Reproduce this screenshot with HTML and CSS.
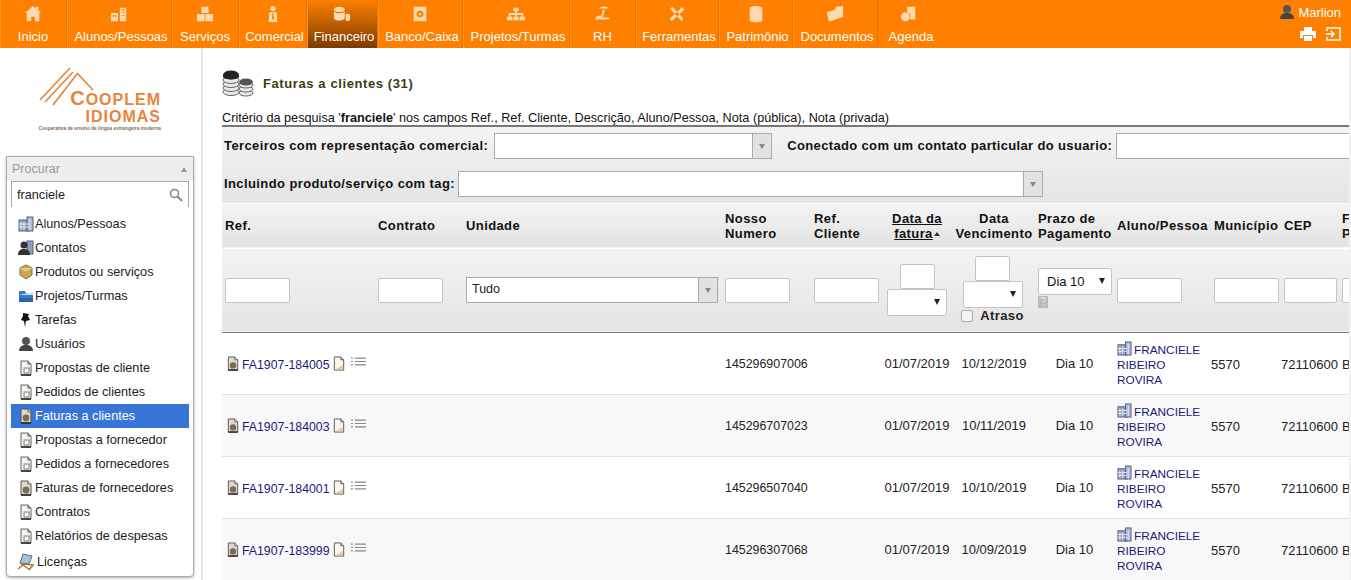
FILE: index.html
```html
<!DOCTYPE html>
<html lang="pt-BR">
<head>
<meta charset="UTF-8">
<title>Faturas a clientes</title>
<link rel="stylesheet" href="styles.css">
</head>
<body>
<svg class="defs" width="0" height="0">
  <symbol id="i-doc" viewBox="0 0 12 16"><path d="M1 1h7l3 3v11H1z" fill="#f7f5ef" stroke="#666"/><path d="M8 1v3h3" fill="#bbb" stroke="#555"/><rect x="4" y="8" width="5" height="5" fill="none" stroke="#8a8272"/><path d="M1 15h10" stroke="#222" stroke-width="1.500"/></symbol>
  <symbol id="i-bill" viewBox="0 0 12 16"><path d="M1 1h7l3 3v11H1z" fill="#ddd8cc" stroke="#555"/><path d="M8 1v3h3" fill="#fff" stroke="#555"/><circle cx="6" cy="10" r="3.400" fill="#7b6a55"/><path d="M1 15h10" stroke="#222" stroke-width="1.500"/></symbol>
  <symbol id="i-note" viewBox="0 0 12 16"><path d="M1 1h7l3 3v11H1z" fill="#fdf6ea" stroke="#555"/><path d="M8 1v3h3" fill="#ddd" stroke="#555"/><path d="M3 14h7V9z" fill="#f3c99a"/></symbol>
  <symbol id="i-list" viewBox="0 0 16 9"><path d="M0 1h2M4 1h12M0 4.500h2M4 4.500h12M0 8h2M4 8h12" stroke="#888" stroke-width="1.300"/></symbol>
  <symbol id="i-company" viewBox="0 0 16 16"><rect x="1" y="4" width="10" height="11" fill="#8f9fc4" stroke="#56627f"/><rect x="9" y="1" width="6" height="14" fill="#aab6d2" stroke="#56627f"/><path d="M3 6v8M6 6v8M1 8h10M1 11h10M12 3v11" stroke="#e5e9f2"/></symbol>
  <symbol id="i-contact" viewBox="0 0 16 16"><rect x="9" y="1" width="6" height="13" fill="#8f9fc4" stroke="#56627f"/><circle cx="6" cy="5" r="3.500" fill="#333"/><path d="M0 15c0-5 3-6 6-6s6 1 6 6z" fill="#333"/></symbol>
  <symbol id="i-box" viewBox="0 0 16 16"><path d="M8 1l6 3v7l-6 4-6-4V4z" fill="#c9a654" stroke="#85703a"/><path d="M2 4l6 3 6-3" fill="#e3cb8a" stroke="#e3cb8a"/></symbol>
  <symbol id="i-folder" viewBox="0 0 16 16"><path d="M1 3h6l1 2h7v9H1z" fill="#3b78c9"/><path d="M1 7l14-3v3H1z" fill="#cfe0f5"/><path d="M1 10h14v4H1z" fill="#2c62ad"/></symbol>
  <symbol id="i-pin" viewBox="0 0 16 16"><path d="M5 1l6 1-1 2 2 4-4 1-1 6-1-6-3-1 2-4z" fill="#111"/></symbol>
  <symbol id="i-user" viewBox="0 0 16 16"><circle cx="8" cy="5" r="4" fill="#555"/><path d="M1 15c0-5 4-6 7-6s7 1 7 6z" fill="#444"/></symbol>
  <symbol id="i-chair" viewBox="0 0 18 18"><path d="M6 1l9 2-3 8-9-1z" fill="#9cc4ea" stroke="#7a6a4a"/><path d="M1 16l6-5 9 1-4 5M3 10l10 7" fill="none" stroke="#a5743a" stroke-width="1.500"/></symbol>
  <symbol id="i-coins" viewBox="0 0 32 28"><g fill="#e8e8e8" stroke="#666"><ellipse cx="9" cy="23" rx="8" ry="3.500"/><ellipse cx="9" cy="19" rx="8" ry="3.500"/><ellipse cx="9" cy="15" rx="8" ry="3.500"/><ellipse cx="9" cy="11" rx="8" ry="3.500"/><ellipse cx="24" cy="24" rx="7" ry="3"/><ellipse cx="24" cy="20" rx="7" ry="3"/><ellipse cx="24" cy="16" rx="7" ry="3"/></g><ellipse cx="9" cy="6" rx="8" ry="4.500" fill="#222"/><path d="M1 6v2c1 3 15 3 16 0V6z" fill="#222"/><ellipse cx="24" cy="13" rx="7" ry="3.500" fill="#555"/></symbol>
</svg>

<header class="topbar">
  <nav class="tabs">
    <a class="tab plain"><svg class="tab-icon" viewBox="0 0 20 20"><path d="M10 1l3 2.500V2h3v4l3 3h-2v9H12v-5H8v5H3V9H1z"/></svg><span>Inicio</span></a>
    <a class="tab"><svg class="tab-icon" viewBox="0 0 20 20"><path fill-rule="evenodd" d="M1 9h8v9H1zM3 11v2h1.500v-2zM5.500 11v2H7v-2zM11 3h7v15h-7zM13 5v1h3V5zM13 8v1h3V8zM13 11v1h3v-1z"/></svg><span>Alunos/Pessoas</span></a>
    <a class="tab plain"><svg class="tab-icon" viewBox="0 0 20 20"><path d="M6 2h8v7H6zM1 10h8.500v8H1zM10.500 10H19v8h-8.500z"/></svg><span>Serviços</span></a>
    <a class="tab"><svg class="tab-icon" viewBox="0 0 20 20"><circle cx="10" cy="4" r="3"/><path fill-rule="evenodd" d="M6 8h8l1 11H5zM9.500 9l-.7 6 1.200 2 1.200-2-.7-6z"/></svg><span>Comercial</span></a>
    <a class="tab active"><svg class="tab-icon" viewBox="0 0 20 20"><ellipse cx="7" cy="5" rx="6" ry="3"/><path d="M1 7c2 3 10 3 12 0v8c-2 3-10 3-12 0zM14 10c3-1 5 0 5 1v5c-1 2-4 2-5 1z"/></svg><span>Financeiro</span></a>
    <a class="tab"><svg class="tab-icon" viewBox="0 0 20 20"><path fill-rule="evenodd" d="M3 2h14v16H3zM10 6a4 4 0 1 0 .01 0zM10 8.500a1.500 1.500 0 1 1-.01 0z"/></svg><span>Banco/Caixa</span></a>
    <a class="tab"><svg class="tab-icon" viewBox="0 0 20 20"><path d="M7 3h6v4h-2v2h7v4h2v4h-6v-4h2v-2h-5v2h2v4H7v-4h2v-2H4v2h2v4H0v-4h2V9h7V7H7z"/></svg><span>Projetos/Turmas</span></a>
    <a class="tab plain"><svg class="tab-icon" viewBox="0 0 20 20"><path d="M5 4c3-3 9-3 12 0zM10 5h2l-2 8H8zM3 12h5v2h9v2H1z"/></svg><span>RH</span></a>
    <a class="tab"><svg class="tab-icon" viewBox="0 0 20 20"><path d="M2 4l3-2 12 13-2 3zM18 5l-3-3-2 3-11 10 2 3 11-10z"/></svg><span>Ferramentas</span></a>
    <a class="tab"><svg class="tab-icon" viewBox="0 0 20 20"><path d="M3 4c0-4 14-4 14 0v13c0 3-14 3-14 0z"/></svg><span>Patrimônio</span></a>
    <a class="tab"><svg class="tab-icon" viewBox="0 0 20 20"><path d="M1 8l9-3 1-3 8-1v12L5 18H3z"/></svg><span>Documentos</span></a>
    <a class="tab"><svg class="tab-icon" viewBox="0 0 20 20"><path d="M8 2h9v14h-6a5 5 0 0 0-3-8z"/><circle cx="6" cy="13" r="5"/></svg><span>Agenda</span></a>
  </nav>
  <div class="user-box">
    <div class="user-name"><svg class="icon-16"><use href="#i-user"/></svg>Marlion</div>
    <div class="user-tools">
      <svg width="16" height="14" viewBox="0 0 16 14"><path d="M4 0h8v4H4zM1 4h14a1 1 0 0 1 1 1v6h-3V8H3v3H0V5a1 1 0 0 1 1-1zM4 9h8v5H4z" fill="#fff"/></svg>
      <svg width="15" height="14" viewBox="0 0 15 14"><path d="M1 4V1h13v12H1v-3M0 7h8M5 4l3 3-3 3" fill="none" stroke="#fff" stroke-width="1.500"/></svg>
    </div>
  </div>
</header>

<div class="layout">
  <aside class="sidebar">
    <div class="logo">
      <svg class="logo-roof" width="58" height="40" viewBox="0 0 58 40"><path d="M1 33L31 1M6 35L34 5M14 38L38 7M38 6l16 17" fill="none" stroke="#e8843c" stroke-width="1.700"/></svg>
      <div class="logo-word logo-word-1"><span class="logo-big">C</span>OOPLEM</div>
      <div class="logo-word">IDIOMAS</div>
      <div class="logo-sub">Cooperativa de ensino de língua estrangeira moderna</div>
    </div>
    <div class="search-menu">
      <div class="search-head"><span>Procurar</span><i class="arrow-up"></i></div>
      <div class="search-input"><span>franciele</span>
        <svg width="14" height="14" viewBox="0 0 14 14"><circle cx="5.500" cy="5.500" r="4" fill="none" stroke="#888" stroke-width="1.600"/><path d="M8.500 8.500L13 13" stroke="#888" stroke-width="2"/></svg>
      </div>
      <ul class="search-list">
        <li><svg class="icon-16"><use href="#i-company"/></svg>Alunos/Pessoas</li>
        <li><svg class="icon-16"><use href="#i-contact"/></svg>Contatos</li>
        <li><svg class="icon-16"><use href="#i-box"/></svg>Produtos ou serviços</li>
        <li><svg class="icon-16"><use href="#i-folder"/></svg>Projetos/Turmas</li>
        <li><svg class="icon-16"><use href="#i-pin"/></svg>Tarefas</li>
        <li><svg class="icon-16"><use href="#i-user"/></svg>Usuários</li>
        <li><svg class="icon-16"><use href="#i-doc"/></svg>Propostas de cliente</li>
        <li><svg class="icon-16"><use href="#i-doc"/></svg>Pedidos de clientes</li>
        <li class="selected"><svg class="icon-16"><use href="#i-bill"/></svg>Faturas a clientes</li>
        <li><svg class="icon-16"><use href="#i-doc"/></svg>Propostas a fornecedor</li>
        <li><svg class="icon-16"><use href="#i-doc"/></svg>Pedidos a fornecedores</li>
        <li><svg class="icon-16"><use href="#i-bill"/></svg>Faturas de fornecedores</li>
        <li><svg class="icon-16"><use href="#i-doc"/></svg>Contratos</li>
        <li><svg class="icon-16"><use href="#i-doc"/></svg>Relatórios de despesas</li>
        <li class="last"><svg class="icon-18"><use href="#i-chair"/></svg>Licenças</li>
      </ul>
    </div>
  </aside>

  <main class="content">
    <div class="page-title"><svg class="title-icon"><use href="#i-coins"/></svg><h1>Faturas a clientes (31)</h1></div>
    <div class="criteria">Critério da pesquisa '<b>franciele</b>' nos campos Ref., Ref. Cliente, Descrição, Aluno/Pessoa, Nota (pública), Nota (privada)</div>

    <div class="filters">
      <div class="filter-line">
        <label>Terceiros com representação comercial:</label>
        <div class="combo combo-a"><i class="combo-btn"></i></div>
        <label class="label-b">Conectado com um contato particular do usuario:</label>
        <div class="combo combo-c"></div>
      </div>
      <div class="filter-line">
        <label>Incluindo produto/serviço com tag:</label>
        <div class="combo combo-b"><i class="combo-btn"></i></div>
      </div>
    </div>

    <table class="list">
      <colgroup>
        <col class="c-ref"><col class="c-con"><col class="c-uni"><col class="c-nos"><col class="c-rcl"><col class="c-dfa"><col class="c-dve"><col class="c-pra"><col class="c-alu"><col class="c-mun"><col class="c-cep"><col class="c-ult">
      </colgroup>
      <thead>
        <tr class="head">
          <th>Ref.</th><th>Contrato</th><th>Unidade</th><th>Nosso<br>Numero</th><th>Ref.<br>Cliente</th>
          <th class="center"><u>Data da<br>fatura</u><i class="sort-up"></i></th><th class="center dve">Data<br>Vencimento</th><th>Prazo de<br>Pagamento</th><th>Aluno/Pessoa</th><th>Município</th><th>CEP</th><th>F<br>P</th>
        </tr>
        <tr class="search">
          <td><span class="inp w65"></span></td>
          <td><span class="inp w65"></span></td>
          <td><div class="combo combo-u"><span>Tudo</span><i class="combo-btn"></i></div></td>
          <td><span class="inp w65"></span></td>
          <td><span class="inp w65"></span></td>
          <td class="center"><div class="stack"><span class="inp w35"></span><span class="sel w60"></span></div></td>
          <td class="center"><div class="stack"><span class="inp w35"></span><span class="sel w60"></span><div class="late"><span class="check"></span><b>Atraso</b></div></div></td>
          <td><div class="stack left"><span class="sel w74">Dia 10</span><span class="help">?</span></div></td>
          <td><span class="inp w65"></span></td>
          <td><span class="inp w65"></span></td>
          <td><span class="inp w53"></span></td>
          <td><span class="inp w65"></span></td>
        </tr>
      </thead>
      <tbody>
        <tr>
          <td class="ref"><svg class="icon-12"><use href="#i-bill"/></svg><a>FA1907-184005</a><svg class="icon-12"><use href="#i-note"/></svg><svg class="icon-list"><use href="#i-list"/></svg></td>
          <td></td><td></td><td class="num">145296907006</td><td></td><td class="center">01/07/2019</td><td class="center dve">10/12/2019</td><td class="center">Dia 10</td>
          <td class="name"><svg class="icon-15"><use href="#i-company"/></svg><a>FRANCIELE RIBEIRO ROVIRA</a></td><td class="flush">5570</td><td class="flush">72110600</td><td>B</td>
        </tr>
        <tr>
          <td class="ref"><svg class="icon-12"><use href="#i-bill"/></svg><a>FA1907-184003</a><svg class="icon-12"><use href="#i-note"/></svg><svg class="icon-list"><use href="#i-list"/></svg></td>
          <td></td><td></td><td class="num">145296707023</td><td></td><td class="center">01/07/2019</td><td class="center dve">10/11/2019</td><td class="center">Dia 10</td>
          <td class="name"><svg class="icon-15"><use href="#i-company"/></svg><a>FRANCIELE RIBEIRO ROVIRA</a></td><td class="flush">5570</td><td class="flush">72110600</td><td>B</td>
        </tr>
        <tr>
          <td class="ref"><svg class="icon-12"><use href="#i-bill"/></svg><a>FA1907-184001</a><svg class="icon-12"><use href="#i-note"/></svg><svg class="icon-list"><use href="#i-list"/></svg></td>
          <td></td><td></td><td class="num">145296507040</td><td></td><td class="center">01/07/2019</td><td class="center dve">10/10/2019</td><td class="center">Dia 10</td>
          <td class="name"><svg class="icon-15"><use href="#i-company"/></svg><a>FRANCIELE RIBEIRO ROVIRA</a></td><td class="flush">5570</td><td class="flush">72110600</td><td>B</td>
        </tr>
        <tr>
          <td class="ref"><svg class="icon-12"><use href="#i-bill"/></svg><a>FA1907-183999</a><svg class="icon-12"><use href="#i-note"/></svg><svg class="icon-list"><use href="#i-list"/></svg></td>
          <td></td><td></td><td class="num">145296307068</td><td></td><td class="center">01/07/2019</td><td class="center dve">10/09/2019</td><td class="center">Dia 10</td>
          <td class="name"><svg class="icon-15"><use href="#i-company"/></svg><a>FRANCIELE RIBEIRO ROVIRA</a></td><td class="flush">5570</td><td class="flush">72110600</td><td>B</td>
        </tr>
      </tbody>
    </table>
  </main>
</div>
</body>
</html>
```

FILE: styles.css
```css
html, body {
  margin: 0;
  height: 100%;
  overflow: hidden;
  background: #f1f1f1;
}

body {
  width: 1351px;
  height: 580px;
  font-family: "Liberation Sans", Arial, sans-serif;
  font-size: 13px;
  color: #222;
}

.defs {
  position: absolute;
}

/* top menu */
.topbar {
  display: flex;
  justify-content: space-between;
  height: 48px;
  background: #ff8000;
  color: #fff;
}

.tabs {
  display: grid;
  grid-template-columns: 67px 105px 67px 68px 71px 85px 107px 66px 83px 74px 85px 62px;
}

.tab {
  display: flex;
  flex-direction: column;
  align-items: center;
  border-right: 1px solid #e87400;
  box-shadow: inset 1px 0 0 #ff9426;
}

.tab span {
  margin-top: 5px;
  margin-left: 4px;
  line-height: 15px;
  white-space: nowrap;
}

.tab.plain span {
  margin-left: 0;
}

.tab:last-child {
  border-right: 0;
  box-shadow: none;
}

.tab-icon {
  width: 18px;
  height: 20px;
  margin-top: 4px;
  fill: #ffd9b0;
}

.tab.active {
  background: linear-gradient(#ff8000, #7a3c00);
}

.user-box {
  width: 90px;
  padding-right: 10px;
  box-sizing: border-box;
  text-align: right;
}

.user-name {
  display: flex;
  justify-content: flex-end;
  align-items: center;
  gap: 3px;
  margin-top: 4px;
  height: 16px;
}

.user-tools {
  display: flex;
  justify-content: flex-end;
  gap: 10px;
  margin-top: 7px;
}

.icon-16 {
  width: 16px;
  height: 16px;
  flex: none;
}

.icon-18 {
  width: 18px;
  height: 18px;
  flex: none;
}

.icon-15 {
  width: 15px;
  height: 15px;
  vertical-align: -2px;
  margin-right: 2px;
}

.icon-12 {
  width: 12px;
  height: 15px;
  vertical-align: -2px;
}

.icon-list {
  width: 15px;
  height: 9px;
  margin-left: 6px;
  vertical-align: 3px;
}

/* page layout */
.layout {
  display: flex;
  width: 1349px;
  height: 532px;
  background: #fff;
}

.sidebar {
  width: 201px;
  flex: none;
  border-right: 2px solid #e4e4e4;
  overflow: hidden;
}

.logo {
  position: relative;
  height: 108px;
  box-sizing: border-box;
  padding: 40px 40px 0 0;
  text-align: right;
  color: #e8843c;
  font-weight: bold;
}

.logo-roof {
  position: absolute;
  left: 39px;
  top: 19px;
}

.logo-word {
  font-size: 16px;
  line-height: 14px;
  letter-spacing: 1px;
}

.logo-big {
  font-size: 20px;
}

.logo-word-1 {
  line-height: 20px;
}

.logo-sub {
  font-size: 4.800px;
  line-height: 9px;
  color: #8a6a50;
  white-space: nowrap;
}

.search-menu {
  width: 186px;
  height: 419px;
  margin-left: 6px;
  border: 1px solid #aaa;
  border-radius: 0 0 4px 4px;
  background: #fff;
  box-shadow: 0 1px 3px rgba(0, 0, 0, .3);
}

.search-head {
  display: flex;
  justify-content: space-between;
  align-items: center;
  height: 24px;
  padding: 0 6px 0 5px;
  background: #eee;
  color: #999;
  font-size: 12.500px;
}

.arrow-up {
  width: 0;
  height: 0;
  border: 3px solid transparent;
  border-top: 0;
  border-bottom: 5px solid #999;
}

.search-input {
  display: flex;
  justify-content: space-between;
  align-items: center;
  width: 178px;
  height: 26px;
  margin-left: 4px;
  padding: 0 5px;
  box-sizing: border-box;
  border: 1px solid #aaa;
  border-bottom: 0;
  color: #222;
  font-size: 12.700px;
}

.search-list {
  list-style: none;
  margin: 0 0 0 4px;
  padding: 5px 0 0;
  width: 178px;
}

.search-list li {
  display: flex;
  align-items: center;
  gap: 1px;
  height: 24px;
  padding-left: 7px;
  color: #222;
  font-size: 12.700px;
  white-space: nowrap;
}

.search-list li.selected {
  background: #3875d7;
  color: #fff;
}

.search-list li.last {
  height: 28px;
  padding-left: 6px;
  gap: 2px;
}

/* main area */
.content {
  flex: 1;
  min-width: 0;
  padding-left: 19px;
  overflow: hidden;
}

.page-title {
  display: flex;
  align-items: center;
  height: 30px;
  margin-top: 20px;
}

.title-icon {
  width: 32px;
  height: 28px;
  margin-right: 9px;
}

h1 {
  margin: 0;
  font-size: 13px;
  letter-spacing: .6px;
  color: #3c3c14;
}

.criteria {
  margin-top: 9px;
  padding-top: 2px;
  height: 16px;
  line-height: 18px;
  font-size: 12.700px;
  white-space: nowrap;
  border-bottom: 2px solid #777;
  color: #111;
}

.filters {
  height: 76px;
  background: linear-gradient(#f4f4f4, #e4e4e4);
  border-bottom: 1px solid #fff;
  white-space: nowrap;
}

.filter-line {
  display: flex;
  align-items: center;
  height: 38px;
  padding-left: 2px;
}

.filter-line label {
  padding-bottom: 1px;
  font-weight: bold;
  letter-spacing: .4px;
  color: #111;
}

.filter-line .label-b {
  margin-left: 15px;
  letter-spacing: .35px;
}

.combo {
  position: relative;
  flex: none;
  height: 26px;
  margin-left: 3px;
  box-sizing: border-box;
  border: 1px solid #aaa;
  background: #fff;
}

.combo-a { width: 278px; margin-left: 6px; }
.combo-b { width: 585px; }
.combo-c { width: 300px; margin-left: 4px; }

.combo-u {
  width: 252px;
  margin-left: 0;
  padding-left: 5px;
  line-height: 22px;
  font-size: 12.500px;
}

.combo-btn {
  position: absolute;
  top: 0;
  right: 0;
  bottom: 0;
  width: 18px;
  background: #e2e2e2;
  border-left: 1px solid #aaa;
}

.combo-btn::after {
  content: "";
  position: absolute;
  left: 6px;
  top: 10px;
  border: 3px solid transparent;
  border-bottom: 0;
  border-top: 5px solid #888;
}

/* table */
.list {
  table-layout: fixed;
  width: 1240px;
  border-collapse: collapse;
}

.c-ref { width: 153px; }
.c-con { width: 88px; }
.c-uni { width: 259px; }
.c-nos { width: 89px; }
.c-rcl { width: 73px; }
.c-dfa { width: 66px; }
.c-dve { width: 85px; }
.c-pra { width: 79px; }
.c-alu { width: 97px; }
.c-mun { width: 70px; }
.c-cep { width: 58px; }
.c-ult { width: 123px; }

.list th,
.list td {
  padding: 0 3px;
  text-align: left;
  vertical-align: middle;
  white-space: nowrap;
}

.list .center {
  padding: 0;
  text-align: center;
}

.list th.dve,
.list tbody .dve {
  padding-left: 3px;
}

.head {
  height: 44px;
  background: linear-gradient(#f4f4f4, #e2e2e2);
  border-bottom: 1px solid #fff;
  line-height: 15px;
}

.head th {
  letter-spacing: .4px;
  color: #111;
}

.sort-up {
  display: inline-block;
  margin-left: 1px;
  vertical-align: 2px;
  border: 3px solid transparent;
  border-top: 0;
  border-bottom: 4px solid #333;
}

.search {
  height: 84px;
  background: linear-gradient(#f4f4f4, #e4e4e4);
  border-bottom: 1px solid #777;
}

.inp,
.sel {
  display: inline-block;
  vertical-align: middle;
  height: 25px;
  box-sizing: border-box;
  border: 1px solid #c4c4c4;
  border-radius: 2px;
  background: #fff;
}

.sel {
  position: relative;
  height: 27px;
  line-height: 26px;
  padding-left: 8px;
  text-align: left;
  color: #111;
}

.sel::after {
  content: "";
  position: absolute;
  right: 6px;
  top: 9px;
  border: 3px solid transparent;
  border-bottom: 0;
  border-top: 6px solid #222;
}

.w35 { width: 35px; }
.w53 { width: 53px; }
.w60 { width: 60px; }
.w65 { width: 65px; }
.w74 { width: 74px; }

.stack {
  display: flex;
  flex-direction: column;
  align-items: center;
}

.stack.left {
  align-items: flex-start;
  padding-bottom: 4px;
}

.late {
  display: flex;
  align-items: center;
  gap: 7px;
  height: 16px;
  line-height: 16px;
}

.late b {
  letter-spacing: .4px;
}

.check {
  width: 10px;
  height: 10px;
  border: 1px solid #aaa;
  border-radius: 2px;
  background: #f3f3f3;
}

.help {
  width: 10px;
  height: 12px;
  margin-top: 1px;
  background: #bbb;
  color: #eee;
  font-size: 10px;
  line-height: 12px;
  text-align: center;
}

.list tbody tr {
  height: 62px;
  border-bottom: 1px solid #e2e2e2;
  color: #222;
}

.list tbody tr:nth-child(even) {
  background: #f8f8f8;
}

.list tbody td {
  padding-top: 2px;
  line-height: 15px;
  white-space: normal;
}

.list tbody .name {
  font-size: 11.800px;
}

.list tbody .num {
  font-size: 12.400px;
}

.list tbody .flush {
  padding-left: 0;
  padding-right: 0;
}

.list a {
  color: #1a1a7a;
}

.list .ref {
  white-space: nowrap;
  padding-left: 5px;
  font-size: 12.300px;
}

.ref a {
  margin: 0 3px;
}
```
